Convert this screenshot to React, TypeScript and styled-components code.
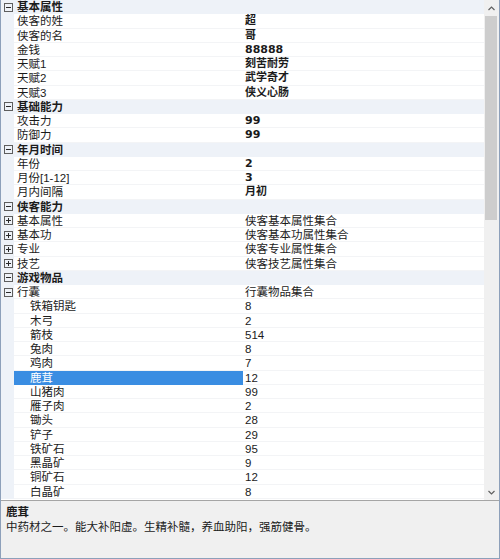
import React from "react";
import styled, { createGlobalStyle, css } from "styled-components";

const ROW_H = 14.26;

const GlobalStyle = createGlobalStyle`
  html, body {
    margin: 0;
    padding: 0;
    background: #ffffff;
  }
  body {
    font-family: "Liberation Sans", "Noto Sans CJK SC", sans-serif;
    font-size: 11.5px;
    color: #1b1b1b;
  }
`;

const Frame = styled.div`
  width: 500px;
  height: 559px;
  box-sizing: border-box;
  border: 1px solid #8da0ba;
  border-top: none;
  display: flex;
  flex-direction: column;
  background: #ffffff;
  overflow: hidden;
`;

const GridArea = styled.div`
  display: flex;
  height: 500px;
  flex: none;
`;

const Rows = styled.div`
  flex: 1;
  overflow: hidden;
`;

const Row = styled.div<{ $category?: boolean }>`
  display: grid;
  grid-template-columns: 13px 229px 1fr;
  height: ${ROW_H}px;
  line-height: ${ROW_H}px;
  box-shadow: inset 0 -1px 0 #f3f4f6;
  ${(p) =>
    p.$category &&
    css`
      background: #eef2f8;
      box-shadow: none;
    `}
`;

const Gutter = styled.div`
  background: #eef2f8;
  display: flex;
  align-items: center;
  justify-content: center;
`;

const Toggle = styled.span<{ $open: boolean }>`
  position: relative;
  width: 9px;
  height: 9px;
  box-sizing: border-box;
  border: 1px solid #5e5e5e;
  margin-left: 1px;

  &::before {
    content: "";
    position: absolute;
    left: 1px;
    top: 3px;
    width: 5px;
    height: 1px;
    background: #2a2a2a;
  }

  ${(p) =>
    !p.$open &&
    css`
      &::after {
        content: "";
        position: absolute;
        left: 3px;
        top: 1px;
        width: 1px;
        height: 5px;
        background: #2a2a2a;
      }
    `}
`;

const Name = styled.div<{ $indent: number; $selected?: boolean }>`
  padding-left: ${(p) => 3 + p.$indent * 13}px;
  white-space: nowrap;
  overflow: hidden;
  ${(p) =>
    p.$selected &&
    css`
      background: #3a8de2;
      color: #ffffff;
    `}
`;

const CategoryName = styled.div`
  grid-column: 2 / 4;
  padding-left: 3px;
  font-weight: bold;
  white-space: nowrap;
`;

const Value = styled.div<{ $bold?: boolean }>`
  padding-left: 2px;
  white-space: nowrap;
  overflow: hidden;
  font-family: "Liberation Sans Narrow", "Liberation Sans", "Noto Sans CJK SC", sans-serif;
  ${(p) =>
    p.$bold &&
    css`
      font-family: "DejaVu Sans", "Noto Sans CJK SC", sans-serif;
      font-weight: bold;
      font-size: 11px;
    `}
`;

const ScrollBar = styled.div`
  width: 15px;
  flex: none;
  background: #f0f0f0;
  display: flex;
  flex-direction: column;
`;

const ArrowButton = styled.div`
  height: 16px;
  display: flex;
  align-items: center;
  justify-content: center;
  flex: none;
`;

const Thumb = styled.div`
  height: 204px;
  margin: 0 2px 0 1px;
  background: #cdcdcd;
  flex: none;
`;

const Track = styled.div`
  flex: 1;
`;

const Description = styled.div`
  flex: 1;
  border-top: 1px solid #a5a5a5;
  background: #f0f0f0;
  padding: 3px 5px;
  font-family: "Noto Sans CJK SC", sans-serif;
  font-size: 11.5px;
  line-height: 15px;
`;

const DescTitle = styled.div`
  font-weight: bold;
`;

type Item = {
  name: string;
  value?: string;
  bold?: boolean;
  toggle?: "open" | "closed";
  indent?: number;
  selected?: boolean;
};

type Section = { title: string; items: Item[] };

const sections: Section[] = [
  {
    title: "基本属性",
    items: [
      { name: "侠客的姓", value: "超", bold: true },
      { name: "侠客的名", value: "哥", bold: true },
      { name: "金钱", value: "88888", bold: true },
      { name: "天赋1", value: "刻苦耐劳", bold: true },
      { name: "天赋2", value: "武学奇才", bold: true },
      { name: "天赋3", value: "侠义心肠", bold: true },
    ],
  },
  {
    title: "基础能力",
    items: [
      { name: "攻击力", value: "99", bold: true },
      { name: "防御力", value: "99", bold: true },
    ],
  },
  {
    title: "年月时间",
    items: [
      { name: "年份", value: "2", bold: true },
      { name: "月份[1-12]", value: "3", bold: true },
      { name: "月内间隔", value: "月初", bold: true },
    ],
  },
  {
    title: "侠客能力",
    items: [
      { name: "基本属性", value: "侠客基本属性集合", toggle: "closed" },
      { name: "基本功", value: "侠客基本功属性集合", toggle: "closed" },
      { name: "专业", value: "侠客专业属性集合", toggle: "closed" },
      { name: "技艺", value: "侠客技艺属性集合", toggle: "closed" },
    ],
  },
  {
    title: "游戏物品",
    items: [
      { name: "行囊", value: "行囊物品集合", toggle: "open" },
      { name: "铁箱钥匙", value: "8", indent: 1 },
      { name: "木弓", value: "2", indent: 1 },
      { name: "箭枝", value: "514", indent: 1 },
      { name: "兔肉", value: "8", indent: 1 },
      { name: "鸡肉", value: "7", indent: 1 },
      { name: "鹿茸", value: "12", indent: 1, selected: true },
      { name: "山猪肉", value: "99", indent: 1 },
      { name: "雁子肉", value: "2", indent: 1 },
      { name: "锄头", value: "28", indent: 1 },
      { name: "铲子", value: "29", indent: 1 },
      { name: "铁矿石", value: "95", indent: 1 },
      { name: "黑晶矿", value: "9", indent: 1 },
      { name: "铜矿石", value: "12", indent: 1 },
      { name: "白晶矿", value: "8", indent: 1 },
    ],
  },
];

const Chevron: React.FC<{ down?: boolean }> = ({ down }) => (
  <svg width="7" height="5" viewBox="0 0 7 5">
    <polyline
      points={down ? "0.5,1 3.5,4 6.5,1" : "0.5,4 3.5,1 6.5,4"}
      fill="none"
      stroke="#606060"
      strokeWidth="1.2"
    />
  </svg>
);

const App: React.FC = () => {
  return (
    <>
      <GlobalStyle />
      <Frame>
        <GridArea>
          <Rows>
            {sections.map((section) => (
              <React.Fragment key={section.title}>
                <Row $category>
                  <Gutter>
                    <Toggle $open />
                  </Gutter>
                  <CategoryName>{section.title}</CategoryName>
                </Row>
                {section.items.map((item) => (
                  <Row key={section.title + item.name}>
                    <Gutter>
                      {item.toggle && <Toggle $open={item.toggle === "open"} />}
                    </Gutter>
                    <Name $indent={item.indent ?? 0} $selected={item.selected}>
                      {item.name}
                    </Name>
                    <Value $bold={item.bold}>{item.value}</Value>
                  </Row>
                ))}
              </React.Fragment>
            ))}
          </Rows>
          <ScrollBar>
            <ArrowButton>
              <Chevron />
            </ArrowButton>
            <Thumb />
            <Track />
            <ArrowButton>
              <Chevron down />
            </ArrowButton>
          </ScrollBar>
        </GridArea>
        <Description>
          <DescTitle>鹿茸</DescTitle>
          <div>中药材之一。能大补阳虚。生精补髓，养血助阳，强筋健骨。</div>
        </Description>
      </Frame>
    </>
  );
};

export default App;
